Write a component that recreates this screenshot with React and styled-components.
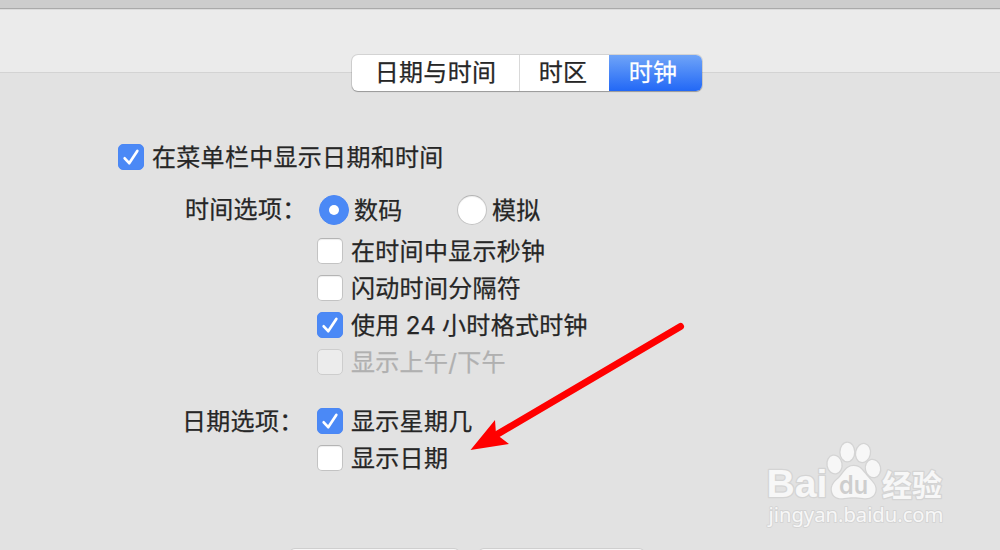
import React from 'react';
import styled, { createGlobalStyle, css } from 'styled-components';

const GlobalStyle = createGlobalStyle`
	body {
		margin: 0;
		overflow: hidden;
		background: #e2e2e2;
	}
`;

const Window = styled.main`
	position: relative;
	box-sizing: border-box;
	width: 1000px;
	height: 550px;
	overflow: hidden;
	background: #e2e2e2;
	color: #262626;
	font-family: Inter, 'Noto Sans CJK SC', sans-serif;
	font-size: 24px;
	line-height: 36px;
	letter-spacing: 0.3px;
	white-space: nowrap;
	-webkit-text-stroke: 0.25px currentColor;
`;

const TitleBar = styled.div`
	height: 8px;
	background: #cdcdcd;
	border-bottom: 1px solid #aaaaaa;
`;

const Toolbar = styled.div`
	box-sizing: border-box;
	height: 64px;
	background: #ebebeb;
	border-top: 1px solid #dcdcdc;
	border-bottom: 1px solid #d3d3d3;
`;

const Tabs = styled.nav`
	display: flex;
	width: 350px;
	height: 36px;
	margin: -18px 0 0 352px;
	border-radius: 6px;
	overflow: hidden;
	background: #ffffff;
	box-shadow: 0 0 0 1px rgba(0, 0, 0, 0.1), 0 1px 1px rgba(0, 0, 0, 0.25);
`;

const Tab = styled.div`
	box-sizing: border-box;
	width: ${({ $width }) => $width}px;
	padding-right: ${({ $inset }) => $inset || 0}px;
	text-align: center;

	& + & {
		border-left: 1px solid #d9d9d9;
	}

	${({ $active }) => $active && css`
		&& {
			border-left: 0;
		}
		color: #ffffff;
		background: linear-gradient(#6fa4f8, #2268f6);
	`}
`;

const Form = styled.section`
	padding: 47px 0 0 118px;
`;

const Group = styled.div`
	display: grid;
	grid-template-columns: ${({ $label }) => $label}px 1fr;
	margin: ${({ $top }) => $top}px 0 0 ${({ $left }) => $left}px;
`;

const GroupLabel = styled.div`
	height: 36px;
	margin-top: ${({ $shift }) => $shift}px;
`;

const Options = styled.div`
	display: flex;
	flex-direction: column;
`;

const RadioRow = styled.div`
	display: flex;
	height: 41px;
	margin-left: 2px;
`;

const Option = styled.label`
	display: flex;
	align-items: center;
	gap: 8px;
	height: 37px;
	color: ${({ $disabled }) => ($disabled ? '#b0b0b0' : 'inherit')};
`;

const RadioOption = styled(Option)`
	width: 138px;
	gap: 5px;
`;

const OptionText = styled.span`
	padding-top: 3px;
	line-height: 34px;
	word-spacing: ${({ $tight }) => ($tight ? -1 : 0)}px;
`;

const Box = styled.span`
	box-sizing: border-box;
	display: flex;
	align-items: center;
	justify-content: center;
	flex: none;
	width: 26px;
	height: 26px;
	border: 1px solid #c3c3c3;
	border-top-color: #b4b4b4;
	border-radius: 5px;
	background: #ffffff;
	box-shadow: inset 0 1px 1px rgba(0, 0, 0, 0.07);

	${({ $checked }) => $checked && css`
		border-color: #4b87f4;
		background: #4b89f6;
		box-shadow: none;
	`}

	${({ $disabled }) => $disabled && css`
		border-color: #cdcdcd;
		background: #ececec;
		box-shadow: none;
	`}
`;

const Radio = styled(Box)`
	width: 30px;
	height: 30px;
	border-radius: 50%;

	&::after {
		content: '';
		width: 10px;
		height: 10px;
		border-radius: 50%;
		background: #ffffff;
	}
`;

const Actions = styled.div`
	display: flex;
	gap: 20px;
	margin: 73px 0 0 290px;
`;

const ActionButton = styled.div`
	width: ${({ $width }) => $width}px;
	height: 40px;
	border-radius: 5px;
	background: #f8f8f8;
	box-shadow: 0 0 0 1px #cfcfcf;
`;

const Arrow = styled.svg`
	position: absolute;
	left: 460px;
	top: 310px;
`;

const Watermark = styled.svg`
	position: absolute;
	left: 750px;
	top: 430px;
	letter-spacing: 0;
	-webkit-text-stroke: 0;
`;

const Check = () => (
	<svg width="24" height="24" viewBox="0 0 24 24" fill="none">
		<path
			d="M5.7 13.3 L10.2 18.2 L18.3 5.9"
			stroke="#ffffff"
			strokeWidth="2.7"
			strokeLinecap="round"
			strokeLinejoin="round"
		/>
	</svg>
);

const CheckOption = ({ checked, disabled, tight, children }) => (
	<Option $disabled={disabled}>
		<Box $checked={checked} $disabled={disabled}>{checked && <Check />}</Box>
		<OptionText $tight={tight}>{children}</OptionText>
	</Option>
);

const BaiduMark = () => (
	<Watermark width="220" height="110" viewBox="0 0 220 110">
		<g fill="#f7f7f7" stroke="#d4d4d4" strokeWidth="2.6" paintOrder="stroke" strokeLinejoin="round">
			<text x="16.5" y="67" fontFamily="Liberation Sans" fontWeight="700" fontSize="39" textLength="61" lengthAdjust="spacingAndGlyphs">Bai</text>
			<ellipse cx="84.5" cy="34.5" rx="6.9" ry="8.8" transform="rotate(-10 84.5 34.5)" />
			<ellipse cx="97.3" cy="22" rx="6.8" ry="9.2" />
			<ellipse cx="113" cy="23" rx="6.8" ry="9" transform="rotate(12 113 23)" />
			<ellipse cx="123" cy="38.5" rx="7" ry="8.6" transform="rotate(-12 123 38.5)" />
			<path d="M103.5 36 C96 36 94 43 89 48 C84 52 81 56 82 61 C83 67 88 69 94 68 C101 67 106 67 113 68 C120 69 125 66 125.5 60 C126 54 121 51 117 46 C112 40 110 36 103.5 36 Z" />
			<text x="132" y="65.5" fontFamily="Noto Sans CJK SC" fontWeight="700" fontSize="30" textLength="60" lengthAdjust="spacingAndGlyphs">经验</text>
			<text x="18.5" y="91.5" fontFamily="Noto Sans" fontSize="20" strokeWidth="1.8" textLength="175" lengthAdjust="spacingAndGlyphs">jingyan.baidu.com</text>
		</g>
		<text x="89" y="63.5" fill="#cecece" fontFamily="Inter" fontWeight="600" fontSize="25" textLength="29" lengthAdjust="spacingAndGlyphs">du</text>
	</Watermark>
);

const App = () => {
	return (
		<>
			<GlobalStyle />
			<Window>
				<TitleBar />
				<Toolbar />
				<Tabs>
					<Tab $width={167}>日期与时间</Tab>
					<Tab $width={90} $inset={3}>时区</Tab>
					<Tab $width={93} $inset={5} $active>时钟</Tab>
				</Tabs>
				<Form>
					<CheckOption checked>在菜单栏中显示日期和时间</CheckOption>
					<Group $top={16} $left={67} $label={132}>
						<GroupLabel $shift={1}>时间选项：</GroupLabel>
						<Options>
							<RadioRow>
								<RadioOption>
									<Radio $checked />
									<OptionText>数码</OptionText>
								</RadioOption>
								<RadioOption>
									<Radio />
									<OptionText>模拟</OptionText>
								</RadioOption>
							</RadioRow>
							<CheckOption>在时间中显示秒钟</CheckOption>
							<CheckOption>闪动时间分隔符</CheckOption>
							<CheckOption checked tight>使用 24 小时格式时钟</CheckOption>
							<CheckOption disabled>显示上午/下午</CheckOption>
						</Options>
					</Group>
					<Group $top={22} $left={64} $label={135}>
						<GroupLabel $shift={2}>日期选项：</GroupLabel>
						<Options>
							<CheckOption checked>显示星期几</CheckOption>
							<CheckOption>显示日期</CheckOption>
						</Options>
					</Group>
				</Form>
				<Actions>
					<ActionButton $width={169} />
					<ActionButton $width={165} />
				</Actions>
				<Arrow width="240" height="150" viewBox="0 0 240 150">
					<path d="M220.5 16.5 L36 125" stroke="#ff0000" strokeWidth="7" strokeLinecap="round" />
					<path d="M10.5 140 L35 110 L36 124 L49 134 Z" fill="#ff0000" />
				</Arrow>
				<BaiduMark />
			</Window>
		</>
	);
};

export default App;
